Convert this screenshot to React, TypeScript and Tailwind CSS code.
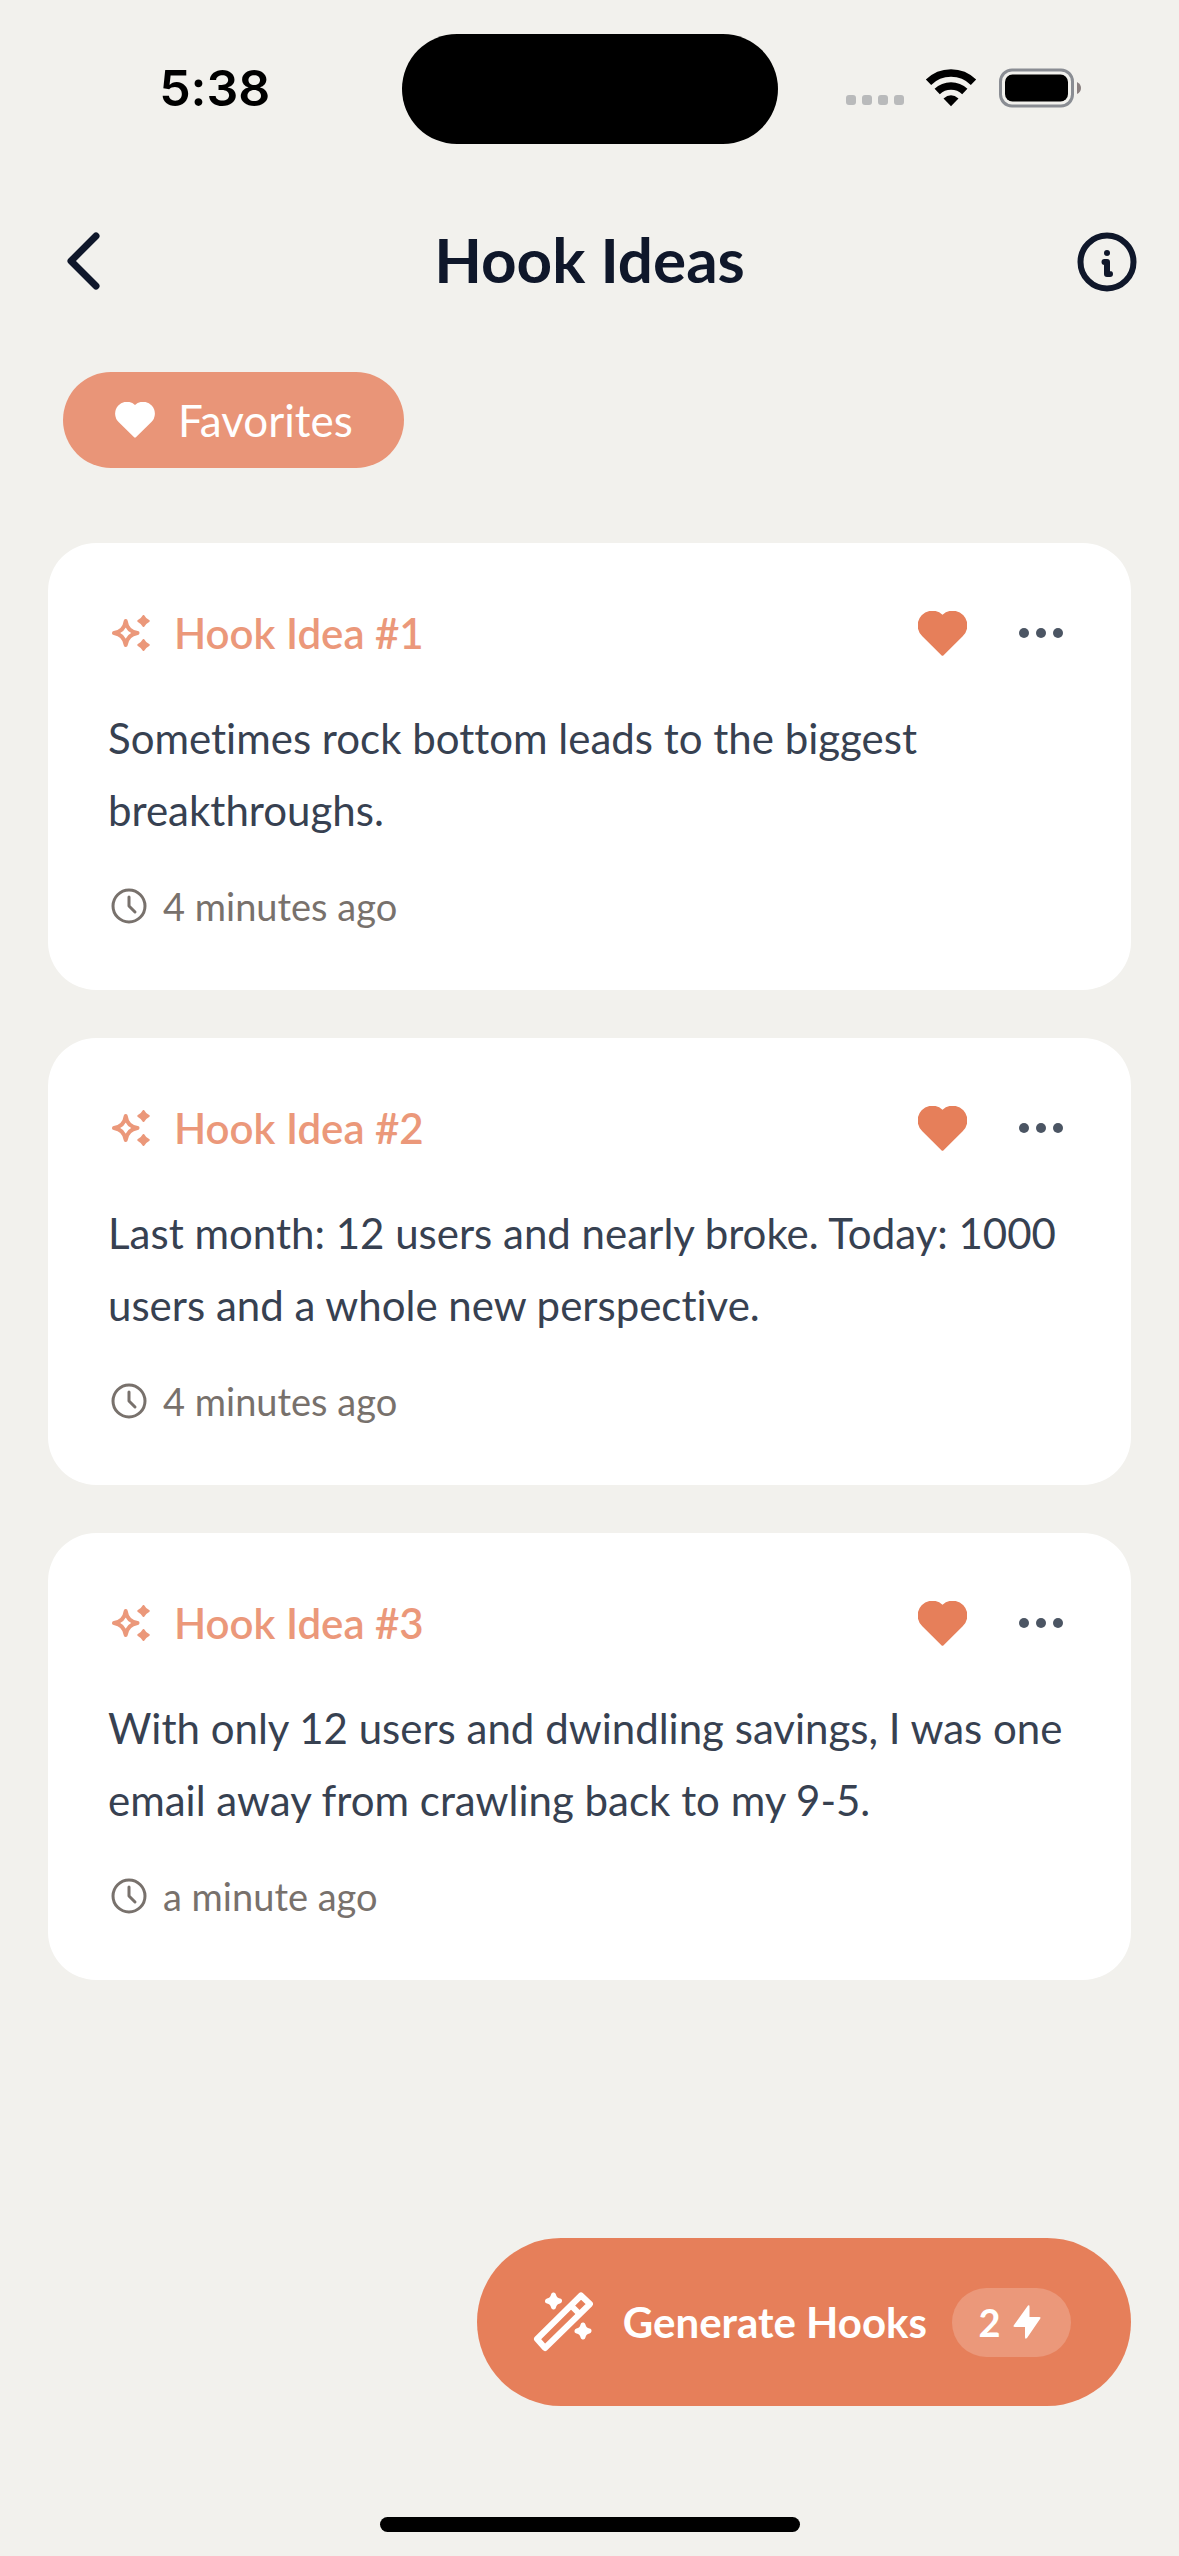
interface HookIdea {
  id: number;
  text: string;
  createdAt: string;
}

const hooks: HookIdea[] = [
  { id: 1, text: "Sometimes rock bottom leads to the biggest breakthroughs.", createdAt: "4 minutes ago" },
  { id: 2, text: "Last month: 12 users and nearly broke. Today: 1000 users and a whole new perspective.", createdAt: "4 minutes ago" },
  { id: 3, text: "With only 12 users and dwindling savings, I was one email away from crawling back to my 9-5.", createdAt: "a minute ago" },
];

function HeartIcon({ className }: { className?: string }) {
  return (
    <svg viewBox="0 0 49 45" fill="currentColor" className={className} aria-hidden="true">
      <path d="M24.5 3.7A14.7 14.7 0 0 0 4.3 25.2L23.4 44.2Q24.5 45.2 25.6 44.2L44.7 25.2A14.7 14.7 0 0 0 24.5 3.7Z" />
    </svg>
  );
}

function SparklesIcon() {
  return (
    <svg viewBox="0 0 38 36" className="h-9 w-[38px]" fill="currentColor" aria-hidden="true">
      <path
        d="M13.7 6C14.6 12.5 19 17 25.5 18C19 19 14.6 23.5 13.7 30C12.8 23.5 8.5 19 2 18C8.5 17 12.8 12.5 13.7 6Z"
        fill="none"
        stroke="currentColor"
        strokeWidth="4"
        strokeLinejoin="round"
      />
      <path d="M31.5 1Q33.2 4.3 36.7 6Q33.2 7.7 31.5 11Q29.8 7.7 26.3 6Q29.8 4.3 31.5 1Z" stroke="currentColor" strokeWidth="2" strokeLinejoin="round" />
      <path d="M31.5 25Q33.2 28.3 36.7 30Q33.2 31.7 31.5 35Q29.8 31.7 26.3 30Q29.8 28.3 31.5 25Z" stroke="currentColor" strokeWidth="2" strokeLinejoin="round" />
    </svg>
  );
}

function WandIcon() {
  return (
    <svg viewBox="0 0 60 60" className="size-15" fill="none" stroke="currentColor" strokeWidth="6" strokeLinejoin="round" aria-hidden="true">
      <path d="M4 47L48 3.5L57 12L12 56Z" />
      <path d="M38 13.5L47 22.5" />
      <g fill="currentColor" strokeWidth="5">
        <path d="M20.5 3Q21.5 8 26.5 9Q21.5 10 20.5 15Q19.5 10 14.5 9Q19.5 8 20.5 3Z" />
        <path d="M50 33Q51 38 56 39Q51 40 50 45Q49 40 44 39Q49 38 50 33Z" />
      </g>
    </svg>
  );
}

function StatusBar() {
  return (
    <div className="grid h-[178px] grid-cols-[1fr_376px_1fr] items-start pt-[34px] text-black">
      <div className="flex h-27 items-center justify-center pl-7 font-[Inter,sans-serif] text-[50px] leading-none font-semibold">
        5:38
      </div>
      <div className="h-[110px] rounded-full bg-black" />
      <div className="flex h-27 items-center justify-end pr-[97px]">
        <svg viewBox="0 0 58 10" className="mt-6 mr-[21px] h-2.5 w-[58px]" fill="#b9babb" aria-hidden="true">
          <rect width="10" height="10" rx="3" />
          <rect x="16" width="10" height="10" rx="3" />
          <rect x="32" width="10" height="10" rx="3" />
          <rect x="48" width="10" height="10" rx="3" />
        </svg>
        <svg viewBox="0 0 52 38" className="mr-[22px] h-[38px] w-[52px]" aria-hidden="true">
          <path d="M3.5 13.3A32 32 0 0 1 48.5 13.3" fill="none" stroke="black" strokeWidth="7.6" />
          <path d="M12.2 22.5A20 20 0 0 1 39.8 22.5" fill="none" stroke="black" strokeWidth="7.6" />
          <path d="M18.5 29.5Q26 23 33.5 29.5L26 37.3Z" />
        </svg>
        <svg viewBox="0 0 83 40" className="h-10 w-[83px]" aria-hidden="true">
          <rect x="1.5" y="2" width="72" height="36" rx="11.5" fill="none" stroke="#8a8d93" strokeWidth="3" />
          <rect x="6" y="6.5" width="63" height="27" rx="7.5" />
          <path d="M78 14Q82 16 82 20Q82 24 78 26Z" fill="#8a8080" />
        </svg>
      </div>
    </div>
  );
}

function HookCard({ hook }: { hook: HookIdea }) {
  return (
    <li className="rounded-[48px] bg-white px-15 pt-15 pb-[54px]">
      <div className="flex h-15 items-center justify-between">
        <div className="flex items-center gap-6 pl-1 text-[#eb987a]">
          <SparklesIcon />
          <h2 className="text-[42px] leading-[60px] font-semibold">Hook Idea #{hook.id}</h2>
        </div>
        <div className="flex items-center gap-[52px] pr-2">
          <button type="button" aria-label="Remove from favorites" className="text-[#e67f5a]">
            <HeartIcon className="h-[45px] w-[49px]" />
          </button>
          <button type="button" aria-label="More options" className="flex gap-[7px]">
            <span className="size-2.5 rounded-full bg-[#4b5563]" />
            <span className="size-2.5 rounded-full bg-[#4b5563]" />
            <span className="size-2.5 rounded-full bg-[#4b5563]" />
          </button>
        </div>
      </div>
      <p className="mt-[39px] text-[42px] leading-[72px] text-[#374151]">{hook.text}</p>
      <div className="mt-[30px] flex items-center gap-4 pl-[3px] text-[#78716c]">
        <svg viewBox="0 0 36 36" className="size-9" fill="none" stroke="currentColor" strokeWidth="3" strokeLinecap="round" strokeLinejoin="round" aria-hidden="true">
          <circle cx="18" cy="18" r="16" />
          <path d="M18 9V18L24 24" />
        </svg>
        <span className="text-[38px] leading-[60px]">{hook.createdAt}</span>
      </div>
    </li>
  );
}

export default function App() {
  return (
    <div className="flex min-h-screen flex-col bg-[#f2f1ed] font-[Lato,sans-serif] [font-variant-ligatures:none]">
      <StatusBar />
      <header className="grid h-[168px] grid-cols-[1fr_auto_1fr] items-center px-[42px] text-[#0f172a]">
        <button type="button" aria-label="Back" className="justify-self-start pl-[22px]">
          <svg viewBox="0 0 38 60" className="h-15 w-[38px]" fill="none" stroke="currentColor" strokeWidth="7" strokeLinecap="round" strokeLinejoin="round" aria-hidden="true">
            <path d="M32 4L7 29L32 54" />
          </svg>
        </button>
        <h1 className="pb-1.5 text-[62px] leading-[72px] font-bold">Hook Ideas</h1>
        <button type="button" aria-label="About hook ideas" className="justify-self-end">
          <svg viewBox="0 0 60 60" className="size-15" fill="none" stroke="currentColor" strokeWidth="6" aria-hidden="true">
            <circle cx="30" cy="30" r="26.5" />
            <path d="M27.5 30H30V42H33" strokeLinecap="round" strokeLinejoin="round" />
            <circle cx="30" cy="21" r="3" fill="currentColor" stroke="none" />
          </svg>
        </button>
      </header>
      <main className="flex flex-1 flex-col px-12">
        <button type="button" className="mt-[26px] ml-[15px] flex h-24 items-center gap-[23px] self-start rounded-full bg-[#e99578] pr-[51px] pl-13 text-[44px] text-white">
          <HeartIcon className="h-9 w-10" />
          Favorites
        </button>
        <ul className="mt-[75px] flex flex-col gap-12">
          {hooks.map((hook) => (
            <HookCard key={hook.id} hook={hook} />
          ))}
        </ul>
      </main>
      <footer className="flex flex-col px-12 pb-6">
        <button type="button" className="flex h-[168px] items-center self-end rounded-full bg-[#e67f5a] pr-15 pl-14 text-[42px] font-bold text-white">
          <WandIcon />
          <span className="ml-[30px]">Generate Hooks</span>
          <span className="ml-[25px] flex h-[69px] w-[119px] items-center justify-center gap-3 rounded-full bg-[#eb987a] pr-1 text-[38px]">
            2
            <svg viewBox="0 0 28 34" className="h-[34px] w-7" fill="currentColor" aria-hidden="true">
              <path d="M15 0.5Q16.5 -0.5 16.5 1.5V12H26Q28.5 12 27 14L14 33Q12 35 12 32V22H2Q-0.5 22 1 20Z" />
            </svg>
          </span>
        </button>
        <div className="mt-[111px] h-[15px] w-[420px] self-center rounded-full bg-black" />
      </footer>
    </div>
  );
}
